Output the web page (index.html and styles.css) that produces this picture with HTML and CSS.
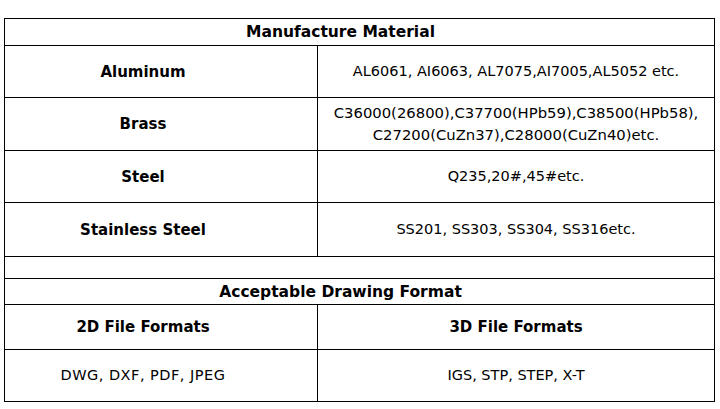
FILE: index.html
```html
<!DOCTYPE html>
<html>
<head>
<meta charset="utf-8">
<link rel="stylesheet" href="styles.css">
</head>
<body>
<table class="spec">
  <colgroup><col class="c1"><col class="c2"></colgroup>
  <tr class="r-head"><td colspan="2" class="head"><span>Manufacture Material</span></td></tr>
  <tr class="r-52"><td class="label first">Aluminum</td><td class="val">AL6061, AI6063, AL7075,AI7005,AL5052 etc.</td></tr>
  <tr class="r-53"><td class="label first">Brass</td><td class="val brass">C36000(26800),C37700(HPb59),C38500(HPb58),<br>C27200(CuZn37),C28000(CuZn40)etc.</td></tr>
  <tr class="r-52"><td class="label first">Steel</td><td class="val">Q235,20#,45#etc.</td></tr>
  <tr class="r-53b"><td class="label first">Stainless Steel</td><td class="val">SS201, SS303, SS304, SS316etc.</td></tr>
  <tr class="r-empty"><td colspan="2"></td></tr>
  <tr class="r-head2"><td colspan="2" class="head"><span>Acceptable Drawing Format</span></td></tr>
  <tr class="r-45"><td class="label first">2D File Formats</td><td class="label">3D File Formats</td></tr>
  <tr class="r-52"><td class="val first wide">DWG, DXF, PDF, JPEG</td><td class="val">IGS, STP, STEP, X-T</td></tr>
</table>
</body>
</html>
```
FILE: styles.css
```css
html, body {
  margin: 0;
  padding: 0;
  background: #fff;
}
body {
  padding: 18px 0 0 4px;
  font-family: "DejaVu Sans", sans-serif;
  color: #000;
}
.spec {
  border-collapse: collapse;
  width: 710px;
  table-layout: fixed;
}
.c1 { width: 313px; }
.c2 { width: 397px; }
.spec td {
  border: 1px solid #000;
  padding: 0;
  text-align: center;
  vertical-align: middle;
}
.spec td.first {
  padding-right: 36px;
}
.spec td.head {
  font-weight: bold;
  font-size: 15.5px;
  padding-right: 38px;
}
.label {
  font-weight: bold;
  font-size: 15px;
}
.val {
  font-size: 14.5px;
  line-height: 21px;
}
.spec td.brass {
  font-size: 14.8px;
  line-height: 22px;
}
.spec td.wide {
  letter-spacing: 0.5px;
}
.r-head td { height: 26px; }
.r-52 td { height: 51px; }
.r-53 td { height: 52px; }
.r-53b td { height: 53px; }
.r-empty td { height: 21px; }
.r-head2 td { height: 25px; }
.r-45 td { height: 44px; }
```
